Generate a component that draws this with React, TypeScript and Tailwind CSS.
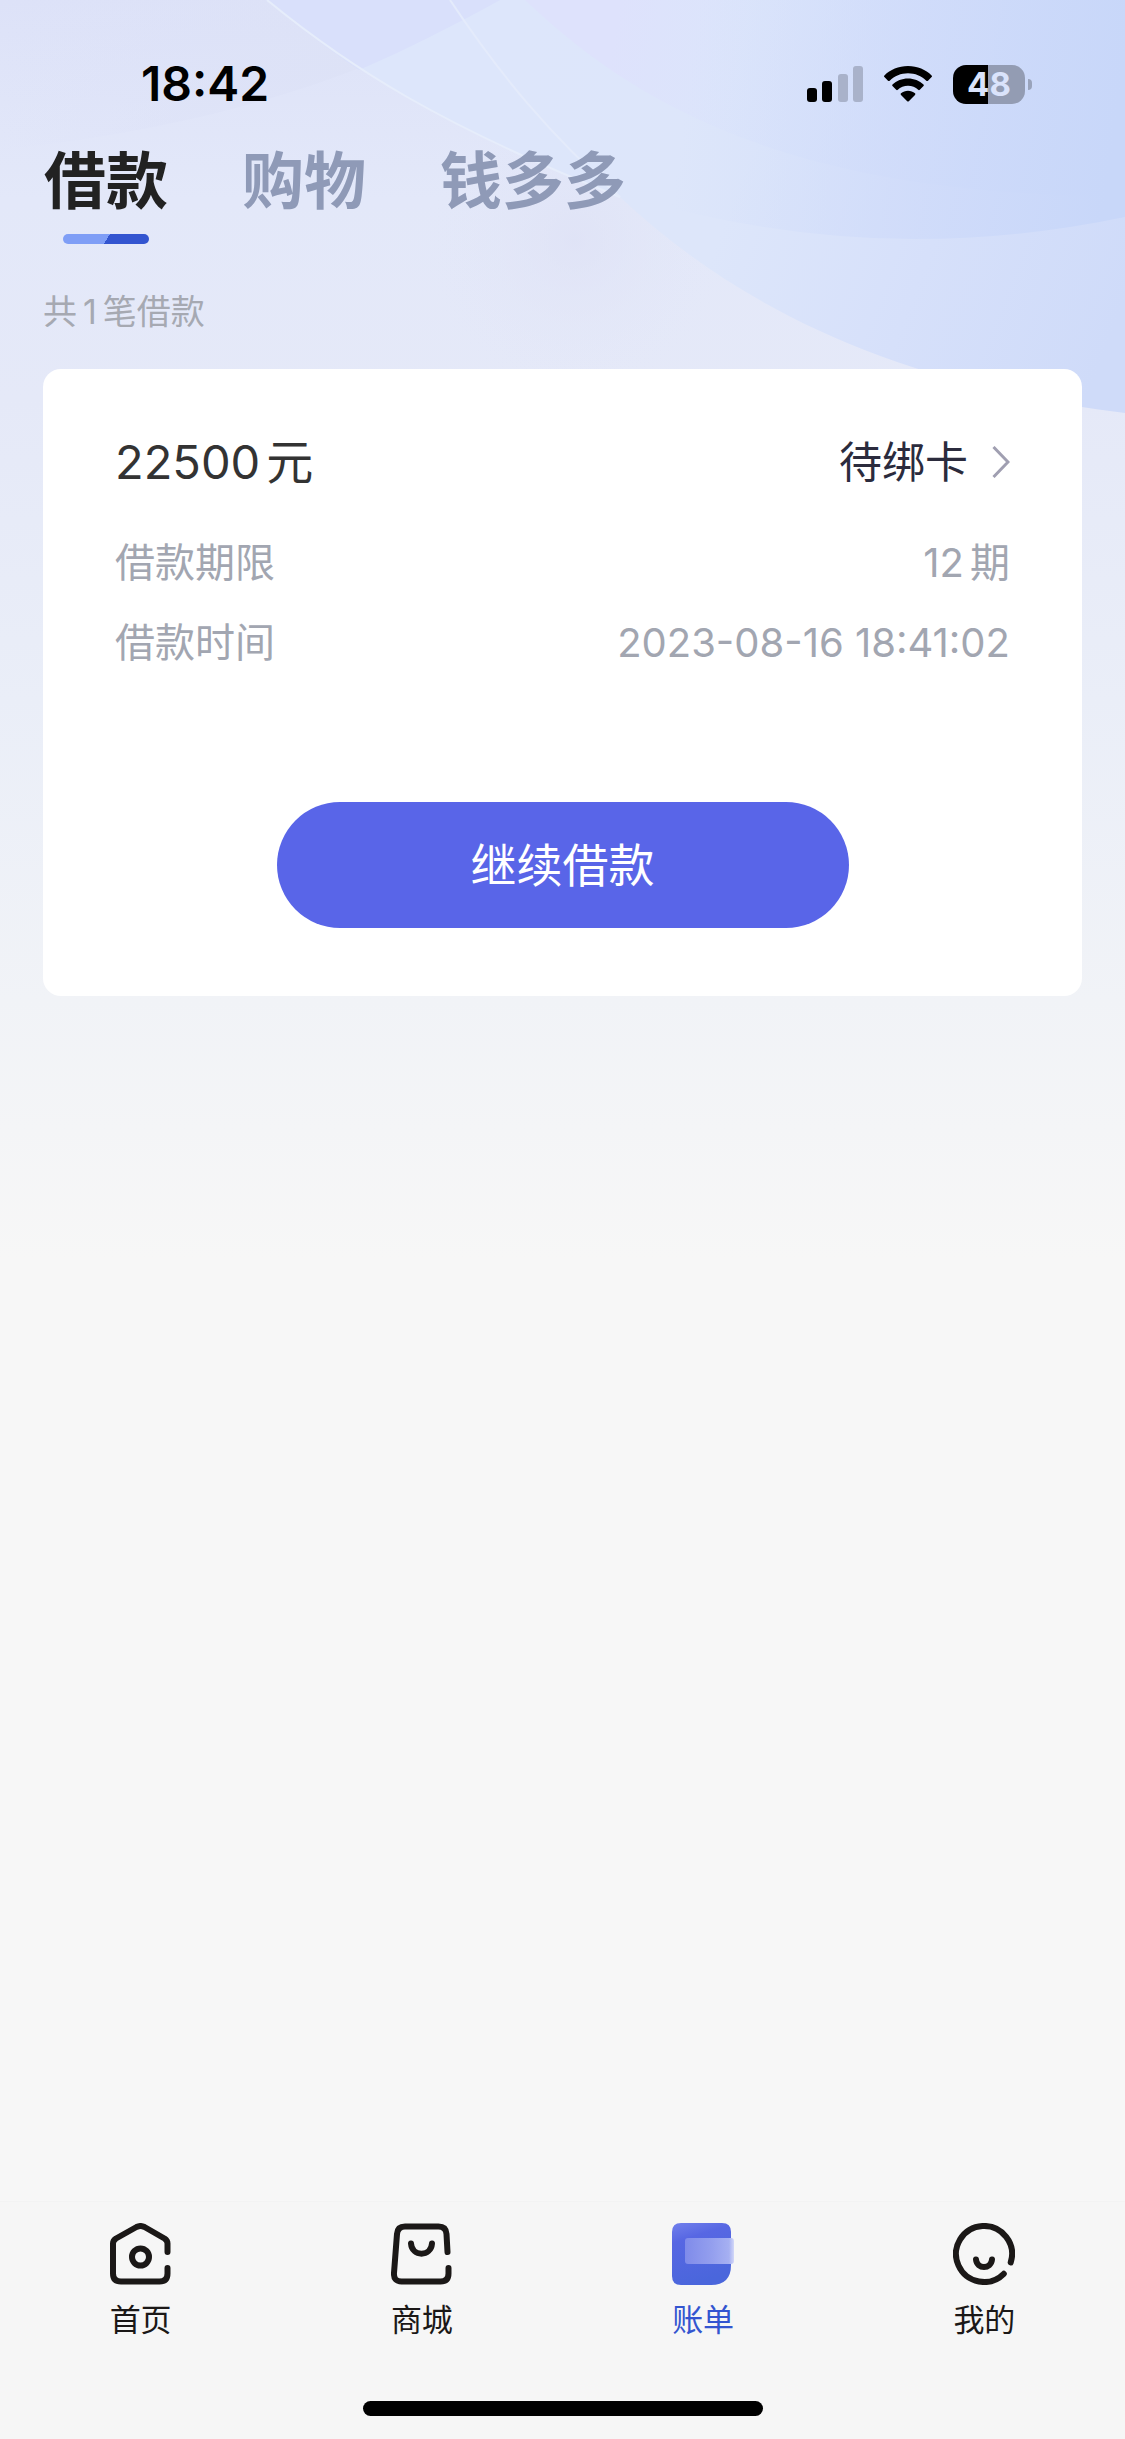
import React from 'react';

interface Loan {
  amount: string;
  status: string;
  term: string;
  createdAt: string;
}

interface NavItem {
  label: string;
  icon: React.ReactNode;
}

const loan: Loan = {
  amount: '22500',
  status: '待绑卡',
  term: '12',
  createdAt: '2023-08-16 18:41:02'
};

const tabs = ['借款', '购物', '钱多多'];

const navItems: NavItem[] = [
  {
    label: '首页',
    icon: (
      <svg className="h-[62px] w-[62px]" viewBox="0 0 62 62" fill="none" stroke="#1b1817" strokeWidth="6" strokeLinecap="round">
        <path d="M57.500 29V20.500q0-3-3-5L34.500 4q-4-2-8 0L6 15.500q-3 2-3 5V50.500q0 8 8 8H49.500q8 0 8-8V45" strokeLinejoin="round" />
        <circle cx="30.500" cy="34" r="8.500" />
      </svg>
    )
  },
  {
    label: '商城',
    icon: (
      <svg className="h-[62px] w-[62px]" viewBox="0 0 62 62" fill="none" stroke="#1b1817" strokeWidth="6" strokeLinecap="round">
        <path d="M56.500 29L55.500 11q-.5-7.500-8-7.500H14q-7.500 0-8 7.500L3 50q-.5 8.500 7.500 8.500H49.500q8 0 8-8V45" strokeLinejoin="round" />
        <path d="M20 20.500c1 13.500 20 13.500 21 0" />
      </svg>
    )
  },
  {
    label: '账单',
    icon: (
      <svg className="h-[62px] w-[62px]" viewBox="0 0 62 62">
        <defs>
          <linearGradient id="billBody" x1="0" y1="0" x2="0.3" y2="1">
            <stop offset="0" stopColor="#7280ec" />
            <stop offset="0.3" stopColor="#5767e3" />
            <stop offset="1" stopColor="#4a66dc" />
          </linearGradient>
          <linearGradient id="billCard" x1="0" y1="0" x2="1" y2="0">
            <stop offset="0" stopColor="#7f8bea" />
            <stop offset="0.55" stopColor="#949fee" />
            <stop offset="0.9" stopColor="#a6b0f2" />
            <stop offset="1" stopColor="#d3d8f8" />
          </linearGradient>
        </defs>
        <path d="M9 0H50q9 0 9 9V42q0 20-20 20H9q-9 0-9-9V9q0-9 9-9Z" fill="url(#billBody)" />
        <rect x="13" y="15" width="49" height="26" rx="3" fill="url(#billCard)" />
      </svg>
    )
  },
  {
    label: '我的',
    icon: (
      <svg className="h-[62px] w-[62px]" viewBox="0 0 62 62" fill="none" stroke="#1b1817" strokeWidth="6" strokeLinecap="round">
        <path d="M57.700 39.500A28 28 0 1 0 50.800 50.800" />
        <path d="M23 36.500c1 10 15 10 16 0" />
      </svg>
    )
  }
];

// Soft overlapping arcs behind the top of the page
const HeaderBackdrop = () => (
  <svg
    className="absolute inset-x-0 top-0 h-[420px] w-full"
    viewBox="0 0 1125 420"
    preserveAspectRatio="none"
    aria-hidden="true"
  >
    <defs>
      <linearGradient id="arc" gradientUnits="userSpaceOnUse" x1="500" y1="60" x2="1125" y2="300">
        <stop offset="0" stopColor="#dde6fb" />
        <stop offset="0.4" stopColor="#dde6fa" />
        <stop offset="0.7" stopColor="#d6e0fa" />
        <stop offset="1" stopColor="#cfdbf9" />
      </linearGradient>
      <linearGradient id="disc" gradientUnits="userSpaceOnUse" x1="700" y1="0" x2="1125" y2="60">
        <stop offset="0" stopColor="#d3dffb" stopOpacity="0" />
        <stop offset="0.5" stopColor="#cfdbfa" stopOpacity="0.7" />
        <stop offset="1" stopColor="#c8d7f9" />
      </linearGradient>
      <linearGradient id="cap" gradientUnits="userSpaceOnUse" x1="620" y1="0" x2="1125" y2="90">
        <stop offset="0" stopColor="#dee2fc" />
        <stop offset="0.25" stopColor="#dbe4fb" stopOpacity="0.7" />
        <stop offset="0.65" stopColor="#d0dcfa" stopOpacity="0.7" />
        <stop offset="1" stopColor="#c8d7f9" />
      </linearGradient>
      <radialGradient id="glow" gradientUnits="userSpaceOnUse" cx="575" cy="240" r="150">
        <stop offset="0" stopColor="#dee1f5" stopOpacity="0.7" />
        <stop offset="1" stopColor="#e3e7f8" stopOpacity="0" />
      </radialGradient>
      <linearGradient id="wedge" gradientUnits="userSpaceOnUse" x1="0" y1="0" x2="400" y2="0">
        <stop offset="0" stopColor="#dce1f8" stopOpacity="0" />
        <stop offset="1" stopColor="#dde2f6" />
      </linearGradient>
    </defs>
    <path d="M0 0H500C380 70 230 125 0 150Z" fill="url(#wedge)" />
    <circle cx="575" cy="240" r="150" fill="url(#glow)" />
    <path d="M267 0C350 68 440 125 620 197C740 310 900 385 1125 413V0Z" fill="url(#arc)" />
    <path d="M267 0C300 28 330 50 359 70C410 48 460 22 500 0Z" fill="#d9e0fb" />
    <path d="M525 0C640 110 800 196 1125 196V0Z" fill="url(#cap)" />
    <path d="M640 0V200Q780 239 915 239Q1020 239 1125 217V0Z" fill="url(#disc)" />
    <path d="M267 0C350 68 440 125 620 197" fill="none" stroke="#e6edfb" strokeWidth="2" />
    <path d="M450 0C500 75 550 135 620 197" fill="none" stroke="#e4ebfb" strokeWidth="2" />
  </svg>
);

const StatusBar = () => (
  <div className="flex h-36 items-center justify-between pt-6 pr-[93px] pl-[141px]">
    <span className="font-['Inter',sans-serif] text-[48px] leading-[48px] font-semibold text-black">18:42</span>
    <div className="flex items-center">
      <svg className="mr-[21px] h-9 w-14" viewBox="0 0 56 36">
        <rect x="0" y="22" width="10" height="14" rx="3" fill="#000" />
        <rect x="15" y="15" width="10" height="21" rx="3" fill="#000" />
        <rect x="31" y="8" width="10" height="28" rx="3" fill="#a9b2ca" />
        <rect x="46" y="0" width="10" height="36" rx="3" fill="#a9b2ca" />
      </svg>
      <svg className="mr-[21px] h-9 w-12" viewBox="0 0 48 36">
        <path d="M24 0C14.500 0 6.200 3.600.4 9.400q-.8.8 0 1.600L4 14.700q.8.8 1.700 0C10.500 10 17 7.300 24 7.300s13.500 2.700 18.300 7.400q.9.800 1.700 0L47.600 11q.8-.8 0-1.600C41.800 3.600 33.500 0 24 0Z" />
        <path d="M24 12.500c-6 0-11.500 2.300-15.500 6q-.8.800 0 1.600L12.200 23.800q.8.700 1.600 0C16.500 21.300 20 19.800 24 19.800s7.500 1.500 10.200 4q.8.700 1.600 0L39.500 20.100q.8-.8 0-1.600C35.500 14.800 30 12.500 24 12.500Z" />
        <path d="M24 24.700c-2.600 0-5 .9-7 2.500q-.9.800 0 1.700L23.200 35.200q.8.700 1.600 0L31 28.900q.9-.9 0-1.700C29 25.600 26.600 24.700 24 24.700Z" />
      </svg>
      <div className="flex h-[39px] w-[72px] items-center justify-center rounded-[13px] bg-linear-to-r from-black from-49% to-[#939cb3] to-49% font-['Inter',sans-serif] text-[33px] leading-[39px] font-bold text-[#dae3fb]">
        48
      </div>
      <div className="ml-[3px] h-[11px] w-1 rounded-r-full bg-[#99a3bb]" />
    </div>
  </div>
);

export default function App() {
  return (
    <div className="relative flex min-h-screen flex-col bg-[#f7f7f7] bg-[linear-gradient(180deg,#dde2f8_0px,#e3e8f9_200px,#e5e9f8_400px,#eaeef8_700px,#f1f3f7_1000px,#f7f7f7_1260px)] font-['Inter','Noto_Sans_CJK_SC',sans-serif]">
      <HeaderBackdrop />

      <div className="relative flex grow flex-col">
        <StatusBar />

        {/* Tabs */}
        <div role="tablist" className="flex gap-[74px] px-11 pt-0.5">
          {tabs.map((tab, i) => (
            <button
              key={tab}
              role="tab"
              aria-selected={i === 0}
              className={`flex flex-col items-center text-[62px] leading-[72px] font-bold ${
                i === 0 ? 'text-[#222222]' : 'text-[#8f9ab7]'
              }`}
            >
              {tab}
              {i === 0 && (
                <span className="mt-4 h-[10px] w-[86px] rounded-full bg-[linear-gradient(120deg,#7f9ef6_51%,#3355d0_51%)]" />
              )}
            </button>
          ))}
        </div>

        <p className="mt-11 px-[43px] text-[34px] leading-[48px] text-[#a6a9b2]">
          共<span className="mx-1.5">1</span>笔借款
        </p>

        {/* Loan card */}
        <section className="mx-[43px] mt-[33px] rounded-[18px] bg-white px-[72px] pt-[60px] pb-[68px]">
          <div className="flex items-center justify-between">
            <div className="text-[47px] leading-[66px] text-[#333333]">
              {loan.amount}
              <span className="ml-1.5">元</span>
            </div>
            <a href="#detail" className="flex items-center gap-6 text-[43px] leading-[66px] text-[#2b2b3d]">
              {loan.status}
              <svg className="h-8 w-[18px]" viewBox="0 0 18 32" fill="none" stroke="#a09fb1" strokeWidth="3">
                <path d="M1.500 1L16 16L1.500 31" />
              </svg>
            </a>
          </div>
          <dl className="mt-7 text-[40px] leading-[80px] text-[#a2a6b1]">
            <div className="flex justify-between">
              <dt>借款期限</dt>
              <dd>
                {loan.term}
                <span className="ml-1.5">期</span>
              </dd>
            </div>
            <div className="flex justify-between">
              <dt>借款时间</dt>
              <dd>{loan.createdAt}</dd>
            </div>
          </dl>
          <button className="mx-auto mt-[119px] block h-[126px] w-[572px] rounded-full bg-[#5965e8] text-[46px] leading-[66px] text-white">
            继续借款
          </button>
        </section>
      </div>

      {/* Bottom navigation */}
      <nav className="relative border-t border-[#f3f3f3] bg-[#f6f6f6] pt-[21px] pb-[23px]">
        <div className="grid grid-cols-4">
          {navItems.map(({ label, icon }) => (
            <a
              key={label}
              href="#nav"
              className={`flex flex-col items-center gap-[13px] text-[31px] leading-[44px] ${
                label === '账单' ? 'text-[#3355d0]' : 'text-[#1b1817]'
              }`}
            >
              {icon}
              {label}
            </a>
          ))}
        </div>
        <div className="mx-auto mt-[59px] h-[15px] w-[400px] rounded-full bg-black" />
      </nav>
    </div>
  );
}
